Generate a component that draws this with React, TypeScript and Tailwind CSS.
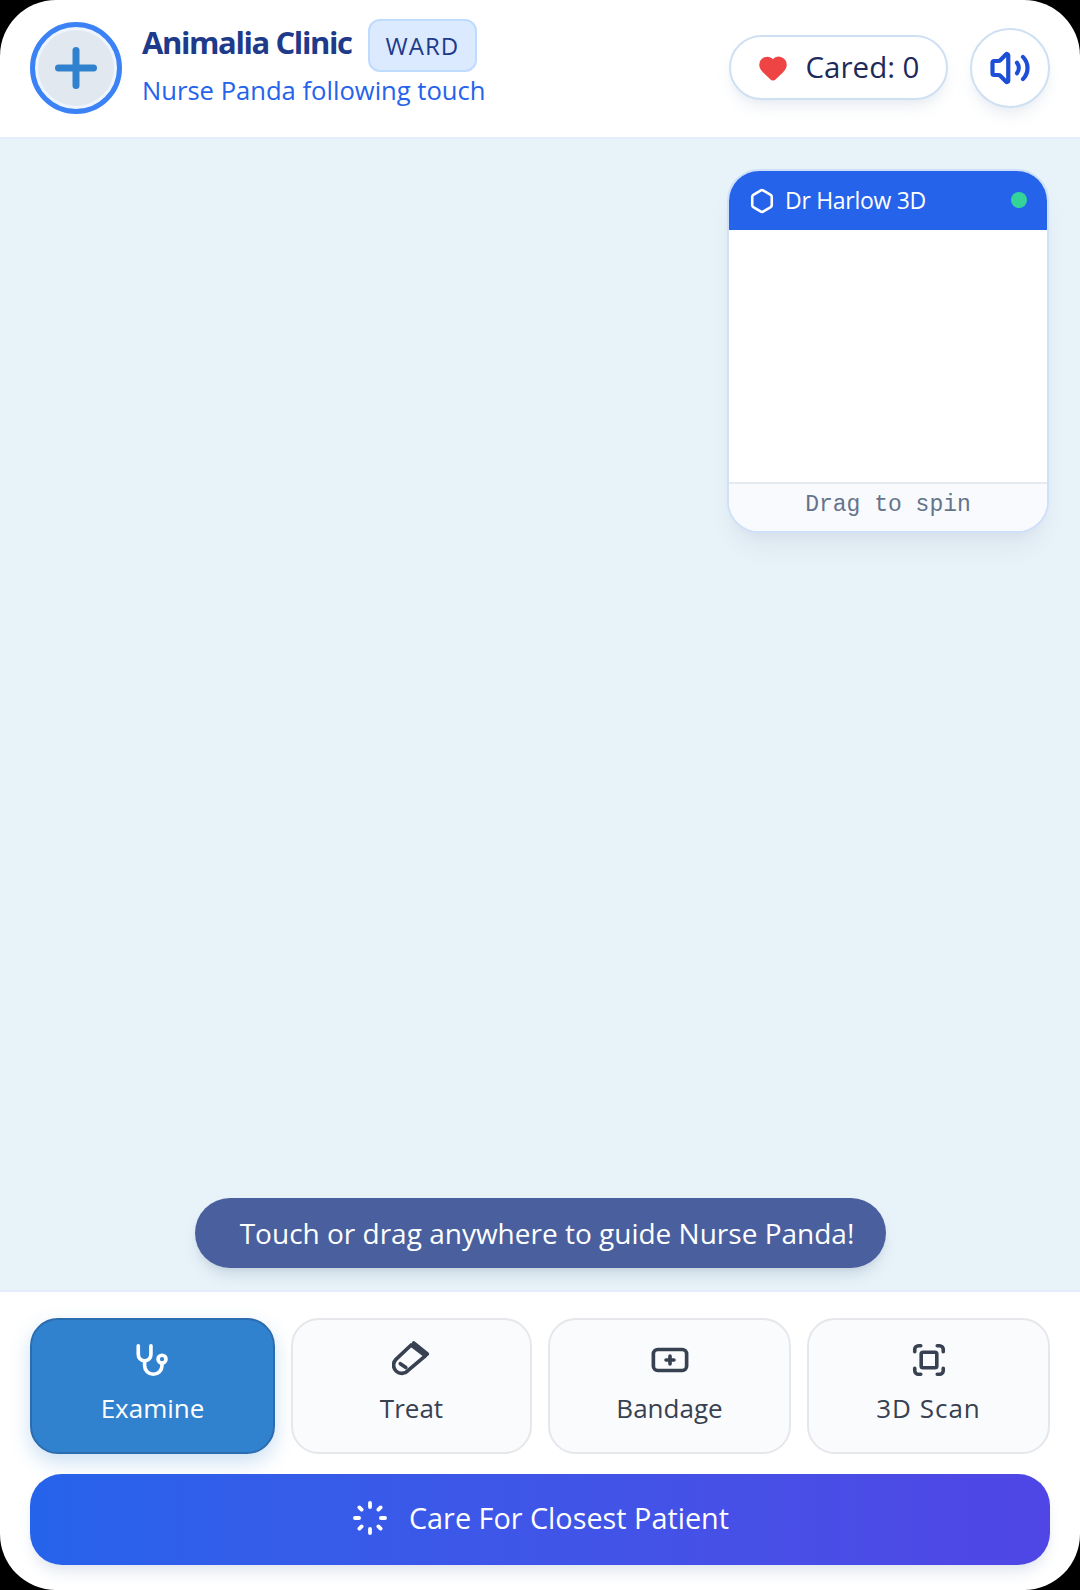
import React from 'react';
import { Plus, Heart, Volume2, Hexagon } from 'lucide-react';

const StethIcon = () => (
  <svg className="-m-px" width="38" height="38" viewBox="0 0 24 24" fill="none" stroke="currentColor" strokeWidth="2.3" strokeLinecap="round" strokeLinejoin="round">
    <path d="M2.7 3v5.5a4 4 0 0 0 8 0V3" />
    <path d="M6.7 12.5v3a5.5 5.5 0 0 0 11 0V14" />
    <circle cx="17.7" cy="11.5" r="2.5" />
  </svg>
);

const TreatIcon = () => (
  <svg className="-m-[2px]" width="40" height="40" viewBox="0 0 24 24" fill="none" stroke="currentColor" strokeWidth="2.2" strokeLinecap="round" strokeLinejoin="round">
    <path d="M11.5 3 2.2 11.8a4.9 4.9 0 0 0 7.3 6.6L20 9.5z" />
    <path d="M13 1.8 21.2 8.4" />
    <path d="M5 14.2 8.3 16.5" />
  </svg>
);

const BandageIcon = () => (
  <svg className="-m-px" width="38" height="38" viewBox="0 0 24 24" fill="none" stroke="currentColor" strokeWidth="2.3" strokeLinecap="round" strokeLinejoin="round">
    <rect x="1.5" y="5.4" width="21" height="13.2" rx="2.8" />
    <path d="M12 9.5v5M9.5 12h5" />
  </svg>
);

const ScanIcon = () => (
  <svg width="36" height="36" viewBox="0 0 24 24" fill="none" stroke="currentColor" strokeWidth="2.4" strokeLinecap="round" strokeLinejoin="round">
    <path d="M2.5 6.5V5A2.5 2.5 0 0 1 5 2.5h1.5" />
    <path d="M17.5 2.5H19A2.5 2.5 0 0 1 21.5 5v1.5" />
    <path d="M21.5 17.5V19a2.5 2.5 0 0 1-2.5 2.5h-1.5" />
    <path d="M6.5 21.5H5A2.5 2.5 0 0 1 2.5 19v-1.5" />
    <rect x="6.8" y="6.8" width="10.4" height="10.4" rx="1.2" />
  </svg>
);

const SpinIcon = () => (
  <svg width="38" height="38" viewBox="0 0 24 24" fill="none" stroke="currentColor" strokeWidth="2.4" strokeLinecap="round" strokeLinejoin="round">
    <path d="M12 2.5v2.6M12 18.9v2.6M2.5 12h2.6M18.9 12h2.6" />
    <path d="M5.3 5.3l1.4 1.4M17.3 17.3l1.4 1.4M5.3 18.7l1.4-1.4M17.3 6.7l1.4-1.4" />
  </svg>
);

const tools = [
  { label: 'Examine', icon: <StethIcon />, active: true, text: '' },
  { label: 'Treat', icon: <TreatIcon />, active: false, text: '' },
  { label: 'Bandage', icon: <BandageIcon />, active: false, text: '' },
  { label: '3D Scan', icon: <ScanIcon />, active: false, text: 'tracking-[1px]' },
];

export default function App() {
  return (
    <div className="bg-black h-[1590px] w-[1080px] overflow-hidden font-['Open_Sans','Liberation_Sans',sans-serif]">
      <div className="h-full bg-white rounded-[56px] overflow-hidden flex flex-col">
        {/* header */}
        <header className="h-[139px] shrink-0 border-b-2 border-[#e3edfb] px-[30px] pb-[2px] flex items-center justify-between">
          <div className="flex items-center gap-5">
            <div className="w-[92px] h-[92px] rounded-full border-[5px] border-[#3b82f6] bg-[#e2e8f0] shadow-[inset_0_0_0_3px_#eef5ff] flex items-center justify-center text-[#3182ce]">
              <Plus size={60} strokeWidth={2.8} />
            </div>
            <div className="-mt-[8px]">
              <div className="flex items-center gap-4">
                <h1 className="text-[31px] font-bold tracking-[-1.4px] text-[#1e3a8a] pb-[6px]">Animalia Clinic</h1>
                <span className="h-[53px] px-4 flex items-center rounded-xl bg-[#dbeafe] border-2 border-[#bfdbfe] text-[24px] tracking-[1px] text-[#1e3a8a]">WARD</span>
              </div>
              <p className="text-[25.6px] text-[#2563eb] leading-[34px] mt-[2px]">Nurse Panda following touch</p>
            </div>
          </div>
          <div className="flex items-center gap-[22px]">
            <div className="h-[65px] w-[219px] rounded-full bg-white border-2 border-[#cfe0f3] shadow-lg shadow-slate-200/70 flex items-center justify-center gap-[18px]">
              <Heart size={30} fill="#ef4444" stroke="#ef4444" />
              <span className="text-[29.5px] text-[#1e2a5a]">Cared: 0</span>
            </div>
            <button className="w-[80px] h-[80px] rounded-full bg-white border-2 border-[#cfe0f3] shadow-lg shadow-slate-200/70 flex items-center justify-center text-[#1d4ed8]">
              <Volume2 size={42} strokeWidth={2.4} />
            </button>
          </div>
        </header>

        {/* ward */}
        <main className="flex-1 bg-[#e8f3f9] border-b-2 border-[#e3edfb] relative flex flex-col justify-end items-center pb-[22px]">
          <div className="absolute top-[30px] right-[31px] w-[322px] h-[364px] rounded-[32px] bg-white border-2 border-[#cfe0fa] shadow-xl shadow-slate-300/40 overflow-hidden flex flex-col">
            <div className="h-[59px] bg-[#2563eb] text-white flex items-center justify-between px-5">
              <div className="flex items-center gap-[10px]">
                <Hexagon size={26} strokeWidth={2.4} />
                <span className="text-[23px] tracking-[-0.3px]">Dr Harlow 3D</span>
              </div>
              <span className="w-4 h-4 rounded-full bg-[#34d399] mb-[2px]" />
            </div>
            <div className="flex-1" />
            <div className="h-[49px] border-t-2 border-[#e5e9f0] bg-[#f8fafd] flex items-center justify-center pb-[4px] font-['Liberation_Mono',monospace] text-[23px] text-[#64748b]">
              Drag to spin
            </div>
          </div>
          <div className="h-[70px] w-[691px] rounded-full bg-[#4a5f9e] shadow-lg shadow-slate-400/30 flex items-center justify-center text-white text-[28px]">
            <span className="pl-[14px]">Touch or drag anywhere to guide Nurse Panda!</span>
          </div>
        </main>

        {/* tools */}
        <footer className="shrink-0 px-[30px] pt-[26px] pb-[25px] flex flex-col gap-5">
          <div className="grid grid-cols-[245px_241px_243px_243px] gap-4">
            {tools.map((t) =>
              t.active ? (
                <button key={t.label} className="h-[136px] pb-[3px] rounded-[28px] bg-[#3182ce] border-2 border-[#2b6cb0] text-white shadow-[0_8px_20px_rgba(49,130,206,0.25)] flex flex-col items-center justify-center gap-[11px] text-[26px]">
                  {t.icon}
                  {t.label}
                </button>
              ) : (
                <button key={t.label} className="h-[136px] pb-[3px] rounded-[28px] bg-[#fafbfd] border-2 border-[#e5e7eb] text-[#374151] flex flex-col items-center justify-center gap-[11px] text-[26px]">
                  {t.icon}
                  <span className={t.text}>{t.label}</span>
                </button>
              ),
            )}
          </div>
          <button className="h-[91px] pb-[3px] rounded-[32px] bg-gradient-to-r from-[#2563eb] to-[#4f46e5] text-white text-[28.8px] shadow-lg shadow-slate-200 flex items-center justify-center gap-5">
            <SpinIcon />
            Care For Closest Patient
          </button>
        </footer>
      </div>
    </div>
  );
}
